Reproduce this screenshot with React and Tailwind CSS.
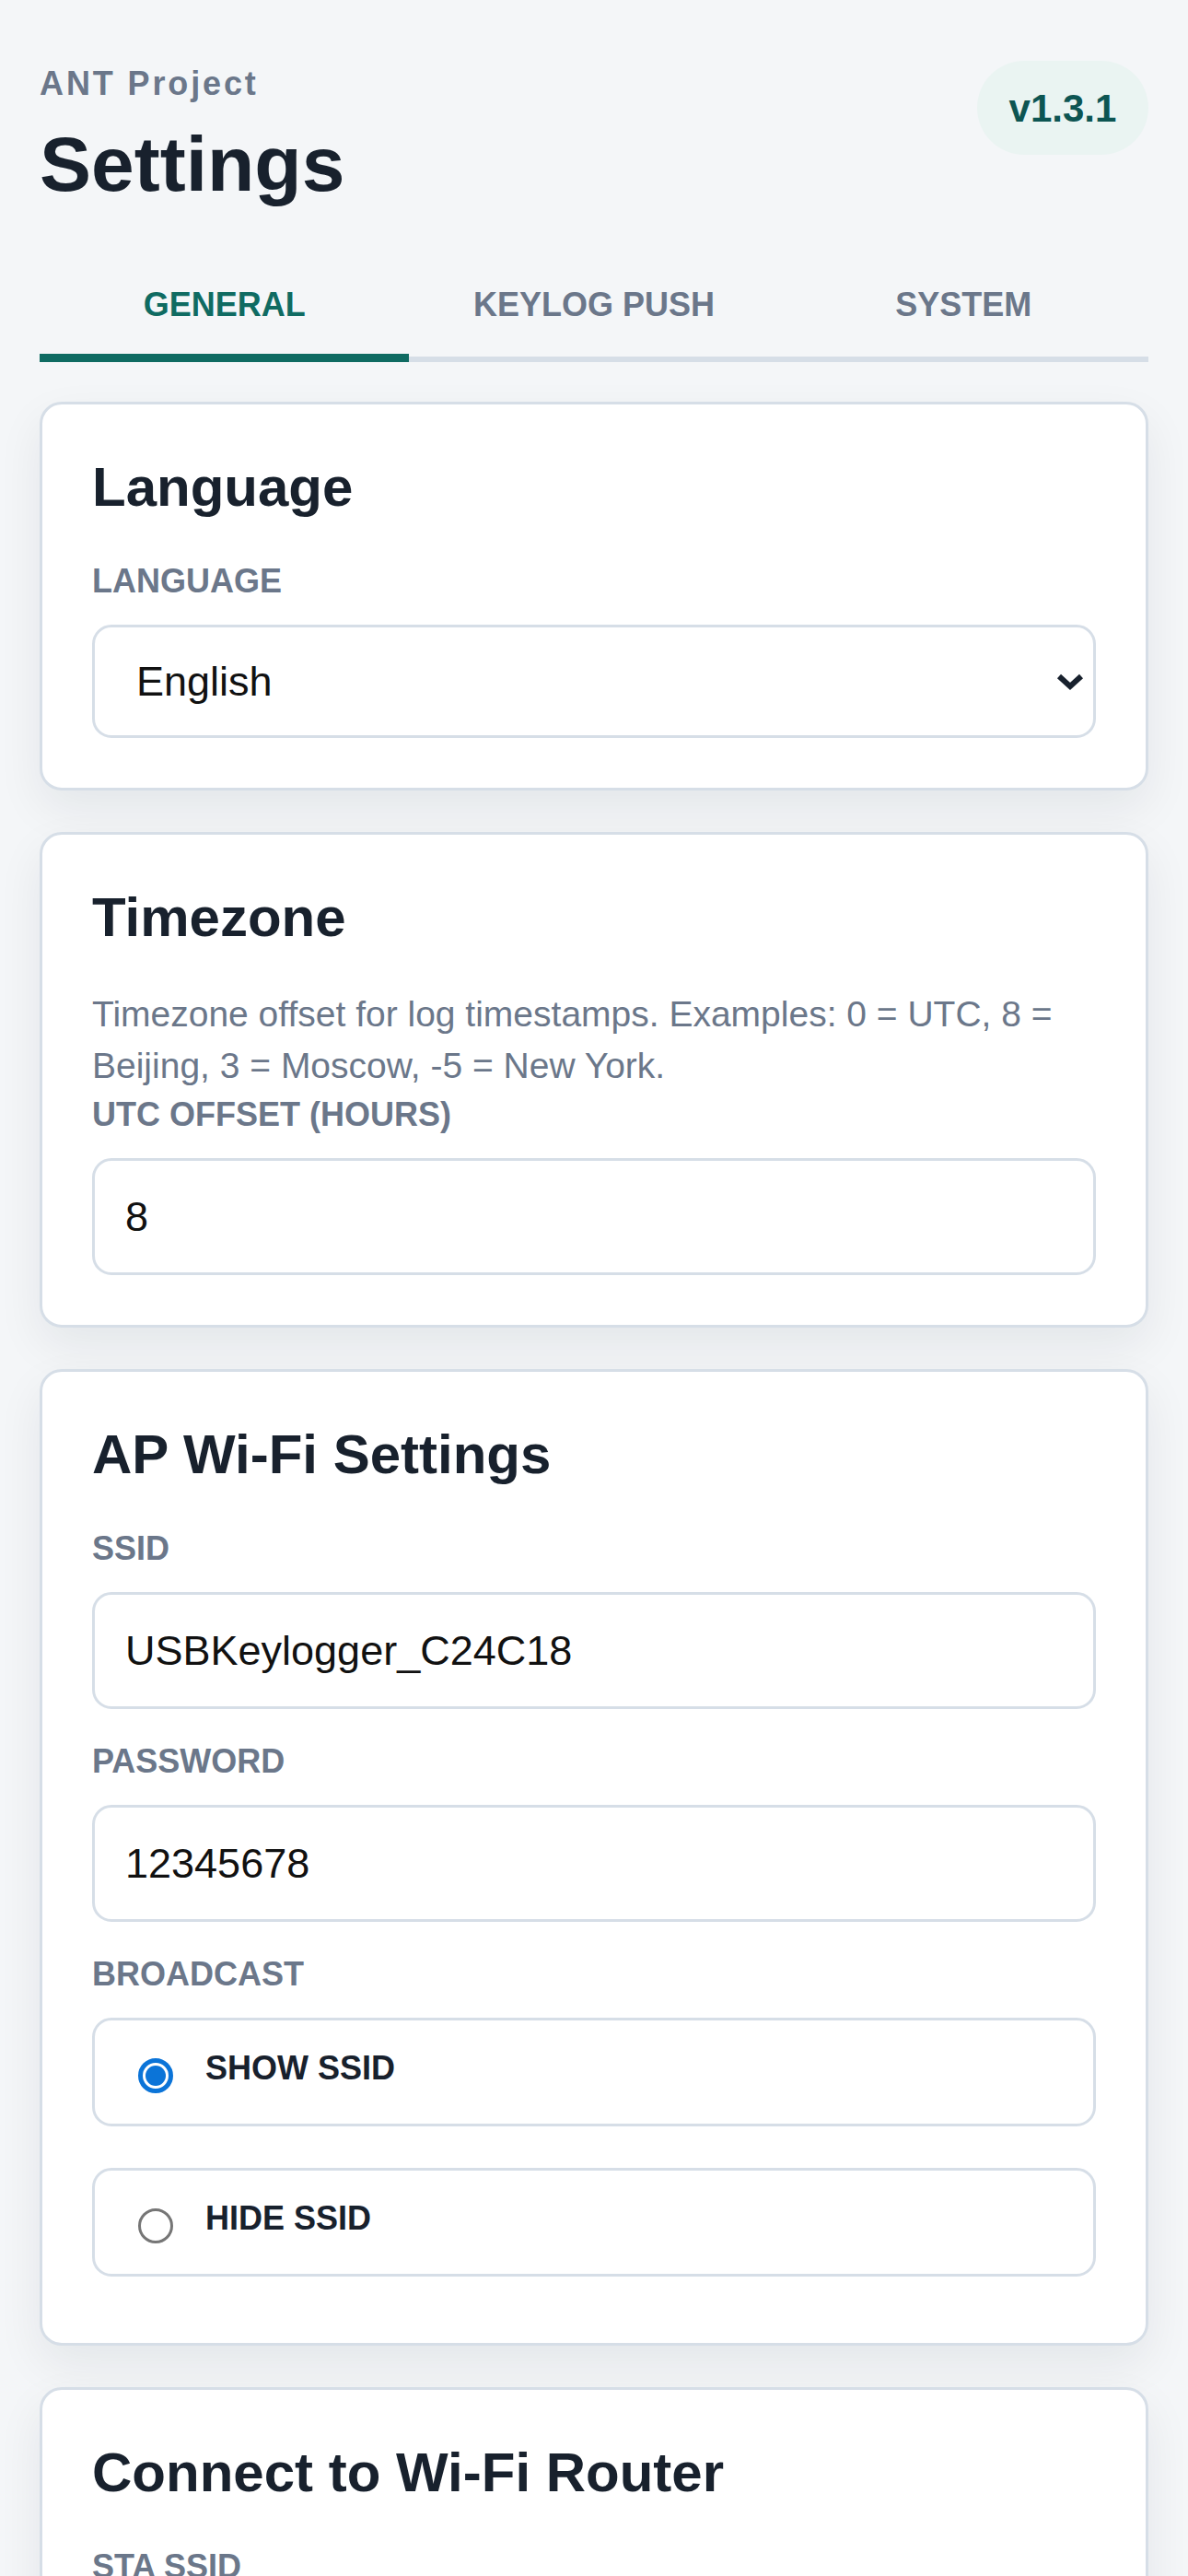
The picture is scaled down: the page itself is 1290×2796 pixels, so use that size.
import React from "react";

const FONT = "font-['Liberation_Sans',Arial,Helvetica,sans-serif]";

function Label({ children, className = "" }) {
  return (
    <div className={`text-[36px] leading-[43px] font-bold uppercase text-[#6b778a] ${className}`}>
      {children}
    </div>
  );
}

function Card({ title, children }) {
  return (
    <section className="rounded-[24px] border-[3px] border-[#d6dee7] bg-white p-[54px] shadow-[0_20px_50px_rgba(15,23,42,0.07)]">
      <h2 className="mb-[44px] text-[60px] leading-[72px] font-bold text-[#18212d]">{title}</h2>
      {children}
    </section>
  );
}

function TextInput({ value }) {
  return (
    <input
      defaultValue={value}
      className="block h-[127px] w-full rounded-[21px] border-[3px] border-[#d6dee7] bg-white pl-[33px] pr-[33px] text-[45px] text-[#111111] outline-none"
    />
  );
}

function Radio({ checked, label }) {
  return (
    <div className="flex h-[118px] items-start rounded-[21px] border-[3px] border-[#d6dee7] bg-white pl-[47px] pt-[30px]">
      {checked ? (
        <span className="mt-[11px] flex h-[38px] w-[38px] shrink-0 items-center justify-center rounded-full border-[5px] border-[#0b74d8] bg-white">
          <span className="h-[22px] w-[22px] rounded-full bg-[#0b74d8]" />
        </span>
      ) : (
        <span className="mt-[11px] h-[38px] w-[38px] shrink-0 rounded-full border-[3px] border-[#767676] bg-white" />
      )}
      <span className="ml-[35px] text-[36px] leading-[43px] font-bold text-[#18212d]">{label}</span>
    </div>
  );
}

export default function App() {
  const tabs = ["GENERAL", "KEYLOG PUSH", "SYSTEM"];
  return (
    <div className={`min-h-screen bg-[#f4f6f8] px-[43px] pt-[69px] pb-[80px] ${FONT}`}>
      <header className="flex items-start justify-between">
        <div>
          <div className="text-[36px] leading-[43px] font-bold tracking-[0.08em] text-[#6b778a]">ANT Project</div>
          <h1 className="mt-[20px] text-[84px] leading-[92px] font-bold text-[#18212d]">Settings</h1>
        </div>
        <div className="-mt-[3px] flex h-[102px] w-[186px] items-center justify-center rounded-full bg-[#eaf4f2] text-[42px] font-bold text-[#0d5552]">
          v1.3.1
        </div>
      </header>

      <nav className="mt-[53px] grid grid-cols-3 border-b-[6px] border-[#d6dee7]">
        {tabs.map((t, i) => (
          <button
            key={t}
            className={
              i === 0
                ? "-mb-[6px] border-b-[9px] border-[#0f6b62] pt-[32px] pb-[32px] text-[36px] leading-[43px] font-bold text-[#0f6b62]"
                : "-mb-[6px] border-b-[9px] border-transparent pt-[32px] pb-[32px] text-[36px] leading-[43px] font-bold text-[#6b778a]"
            }
          >
            {t}
          </button>
        ))}
      </nav>

      <main className="mt-[43px] flex flex-col gap-[45px]">
        <Card title="Language">
          <Label className="mb-[26px]">Language</Label>
          <div className="relative">
            <select
              defaultValue="en"
              className="block h-[123px] w-full appearance-none rounded-[21px] border-[3px] border-[#d6dee7] bg-white pl-[45px] text-[45px] text-[#111111] outline-none"
            >
              <option value="en">English</option>
              <option value="zh">中文</option>
            </select>
            <svg
              className="pointer-events-none absolute right-[13px] top-1/2 -translate-y-1/2"
              width="30"
              height="20"
              viewBox="0 0 30 20"
              fill="none"
            >
              <path d="M3 4 L15 15 L27 4" stroke="#18212d" strokeWidth="6" strokeLinejoin="miter" />
            </svg>
          </div>
        </Card>

        <Card title="Timezone">
          <p className="-mt-[3px] mb-[3px] text-[39px] leading-[56px] text-[#6b778a]">
            Timezone offset for log timestamps. Examples: 0 = UTC, 8 = Beijing, 3 = Moscow, -5 = New York.
          </p>
          <Label className="mb-[26px]">UTC Offset (Hours)</Label>
          <TextInput value="8" />
        </Card>

        <Card title="AP Wi-Fi Settings">
          <Label className="mb-[26px]">SSID</Label>
          <TextInput value="USBKeylogger_C24C18" />
          <Label className="mt-[35px] mb-[26px]">Password</Label>
          <TextInput value="12345678" />
          <Label className="mt-[35px] mb-[26px]">Broadcast</Label>
          <div className="mt-[2px] flex flex-col gap-[45px] pb-[18px]">
            <Radio checked label="SHOW SSID" />
            <Radio label="HIDE SSID" />
          </div>
        </Card>

        <Card title="Connect to Wi-Fi Router">
          <Label className="mb-[26px]">STA SSID</Label>
          <TextInput value="" />
          <Label className="mt-[35px] mb-[26px]">STA Password</Label>
          <TextInput value="" />
        </Card>
      </main>
    </div>
  );
}
